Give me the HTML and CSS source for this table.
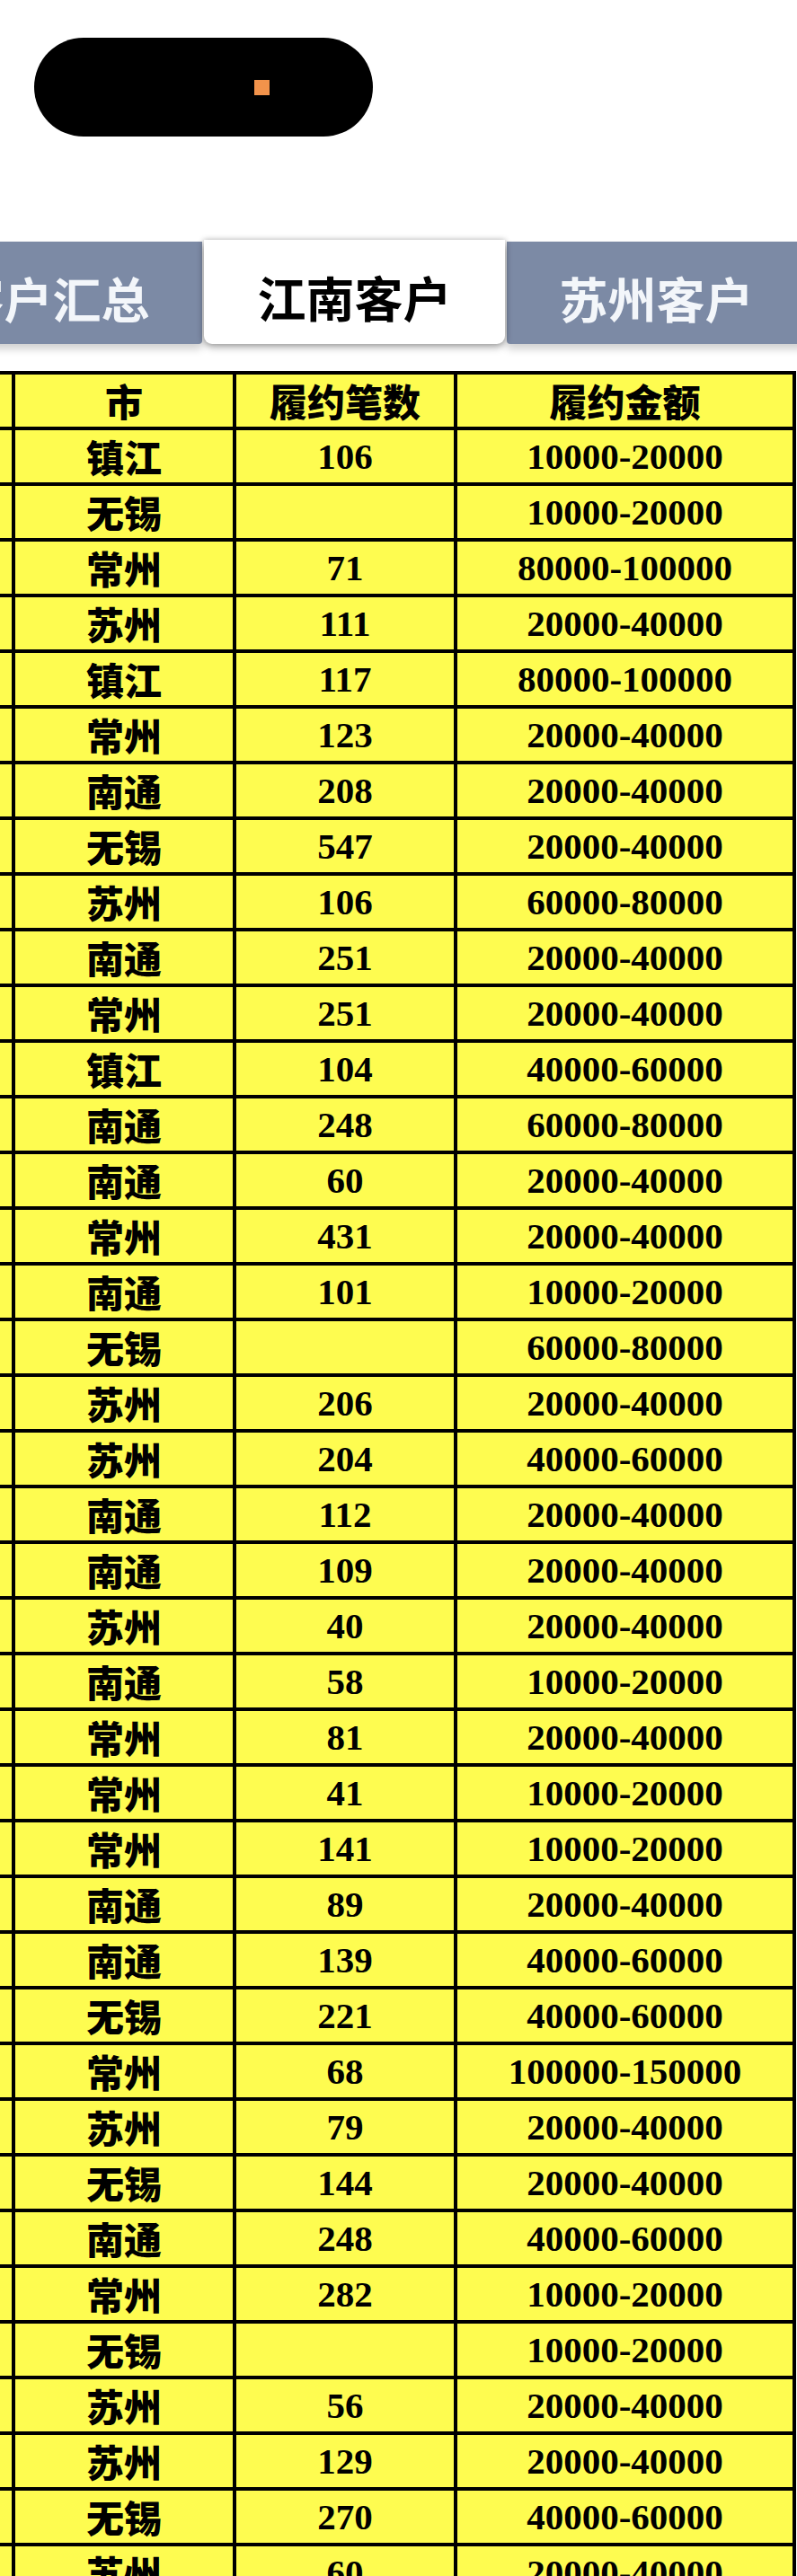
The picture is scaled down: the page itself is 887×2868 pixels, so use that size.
FILE: index.html
```html
<!DOCTYPE html>
<html lang="zh-CN">
<head>
<meta charset="utf-8">
<title>江南客户</title>
<link rel="stylesheet" href="styles.css">
</head>
<body>
<div class="page">
  <header class="top">
    <div class="pill"><span class="pill-dot"></span></div>
  </header>

  <nav class="tabs">
    <div class="tab tab-grey tab-first">客户汇总</div>
    <div class="tab tab-active">江南客户</div>
    <div class="tab tab-grey">苏州客户</div>
  </nav>

  <div class="sheet">
    <table class="grid">
      <colgroup>
        <col class="c0"><col class="c1"><col class="c2"><col class="c3">
      </colgroup>
      <thead>
        <tr><th></th><th>市</th><th>履约笔数</th><th>履约金额</th></tr>
      </thead>
      <tbody>
        <tr><td></td><td class="city">镇江</td><td class="num">106</td><td class="num">10000-20000</td></tr>
        <tr><td></td><td class="city">无锡</td><td class="num"></td><td class="num">10000-20000</td></tr>
        <tr><td></td><td class="city">常州</td><td class="num">71</td><td class="num">80000-100000</td></tr>
        <tr><td></td><td class="city">苏州</td><td class="num">111</td><td class="num">20000-40000</td></tr>
        <tr><td></td><td class="city">镇江</td><td class="num">117</td><td class="num">80000-100000</td></tr>
        <tr><td></td><td class="city">常州</td><td class="num">123</td><td class="num">20000-40000</td></tr>
        <tr><td></td><td class="city">南通</td><td class="num">208</td><td class="num">20000-40000</td></tr>
        <tr><td></td><td class="city">无锡</td><td class="num">547</td><td class="num">20000-40000</td></tr>
        <tr><td></td><td class="city">苏州</td><td class="num">106</td><td class="num">60000-80000</td></tr>
        <tr><td></td><td class="city">南通</td><td class="num">251</td><td class="num">20000-40000</td></tr>
        <tr><td></td><td class="city">常州</td><td class="num">251</td><td class="num">20000-40000</td></tr>
        <tr><td></td><td class="city">镇江</td><td class="num">104</td><td class="num">40000-60000</td></tr>
        <tr><td></td><td class="city">南通</td><td class="num">248</td><td class="num">60000-80000</td></tr>
        <tr><td></td><td class="city">南通</td><td class="num">60</td><td class="num">20000-40000</td></tr>
        <tr><td></td><td class="city">常州</td><td class="num">431</td><td class="num">20000-40000</td></tr>
        <tr><td></td><td class="city">南通</td><td class="num">101</td><td class="num">10000-20000</td></tr>
        <tr><td></td><td class="city">无锡</td><td class="num"></td><td class="num">60000-80000</td></tr>
        <tr><td></td><td class="city">苏州</td><td class="num">206</td><td class="num">20000-40000</td></tr>
        <tr><td></td><td class="city">苏州</td><td class="num">204</td><td class="num">40000-60000</td></tr>
        <tr><td></td><td class="city">南通</td><td class="num">112</td><td class="num">20000-40000</td></tr>
        <tr><td></td><td class="city">南通</td><td class="num">109</td><td class="num">20000-40000</td></tr>
        <tr><td></td><td class="city">苏州</td><td class="num">40</td><td class="num">20000-40000</td></tr>
        <tr><td></td><td class="city">南通</td><td class="num">58</td><td class="num">10000-20000</td></tr>
        <tr><td></td><td class="city">常州</td><td class="num">81</td><td class="num">20000-40000</td></tr>
        <tr><td></td><td class="city">常州</td><td class="num">41</td><td class="num">10000-20000</td></tr>
        <tr><td></td><td class="city">常州</td><td class="num">141</td><td class="num">10000-20000</td></tr>
        <tr><td></td><td class="city">南通</td><td class="num">89</td><td class="num">20000-40000</td></tr>
        <tr><td></td><td class="city">南通</td><td class="num">139</td><td class="num">40000-60000</td></tr>
        <tr><td></td><td class="city">无锡</td><td class="num">221</td><td class="num">40000-60000</td></tr>
        <tr><td></td><td class="city">常州</td><td class="num">68</td><td class="num">100000-150000</td></tr>
        <tr><td></td><td class="city">苏州</td><td class="num">79</td><td class="num">20000-40000</td></tr>
        <tr><td></td><td class="city">无锡</td><td class="num">144</td><td class="num">20000-40000</td></tr>
        <tr><td></td><td class="city">南通</td><td class="num">248</td><td class="num">40000-60000</td></tr>
        <tr><td></td><td class="city">常州</td><td class="num">282</td><td class="num">10000-20000</td></tr>
        <tr><td></td><td class="city">无锡</td><td class="num"></td><td class="num">10000-20000</td></tr>
        <tr><td></td><td class="city">苏州</td><td class="num">56</td><td class="num">20000-40000</td></tr>
        <tr><td></td><td class="city">苏州</td><td class="num">129</td><td class="num">20000-40000</td></tr>
        <tr><td></td><td class="city">无锡</td><td class="num">270</td><td class="num">40000-60000</td></tr>
        <tr><td></td><td class="city">苏州</td><td class="num">60</td><td class="num">20000-40000</td></tr>
      </tbody>
    </table>
  </div>
</div>
</body>
</html>
```

FILE: styles.css
```css
html, body {
  margin: 0;
  padding: 0;
  background: #ffffff;
}

.page {
  width: 887px;
  height: 2868px;
  overflow: hidden;
  font-family: "Noto Sans CJK SC", "Noto Sans", sans-serif;
}

.top {
  padding: 42px 0 0 38px;
  height: 110px;
}

.pill {
  width: 377px;
  height: 110px;
  background: #000000;
  border-radius: 56px;
  display: flex;
  align-items: center;
  padding-left: 245px;
  box-sizing: border-box;
}

.pill-dot {
  display: block;
  width: 17px;
  height: 17px;
  background: #f2934b;
}

.tabs {
  display: flex;
  gap: 2px;
  margin-top: 115px;
  height: 116px;
  align-items: flex-start;
}

.tab {
  flex: none;
  display: flex;
  align-items: center;
  justify-content: center;
  font-size: 54px;
  font-weight: 700;
  line-height: 1;
  box-sizing: border-box;
  padding-top: 12px;
}

.tab-grey {
  width: 333px;
  height: 114px;
  margin-top: 2px;
  background: #7c8aa5;
  color: #f3f6fa;
  border-radius: 0 0 4px 4px;
  box-shadow: 0 6px 8px rgba(0, 0, 0, 0.18);
}

.tab-first {
  margin-left: -108px;
}

.tab-active {
  position: relative;
  z-index: 1;
  width: 335px;
  height: 116px;
  background: #ffffff;
  color: #000000;
  border-radius: 0 0 9px 9px;
  box-shadow: 0 4px 8px rgba(0, 0, 0, 0.28), 0 0 6px rgba(0, 0, 0, 0.25);
}

.sheet {
  margin-top: 30px;
}

.grid {
  margin-left: -91px;
  width: 977px;
  table-layout: fixed;
  border-collapse: separate;
  border-spacing: 4px;
  background: #000000;
}

.c0 { width: 100px; }
.c1 { width: 242px; }
.c2 { width: 242px; }
.c3 { width: 373px; }

.grid th,
.grid td {
  height: 58px;
  padding: 0;
  background: #fefc50;
  color: #000000;
  text-align: center;
  vertical-align: middle;
  box-sizing: border-box;
}

.grid th,
.grid .city {
  font-family: "Noto Sans CJK SC", sans-serif;
  font-size: 42px;
  font-weight: 900;
  line-height: 1;
}

.grid .num {
  font-family: "Liberation Serif", "Times New Roman", serif;
  font-size: 41px;
  font-weight: 700;
  line-height: 1;
}
```
